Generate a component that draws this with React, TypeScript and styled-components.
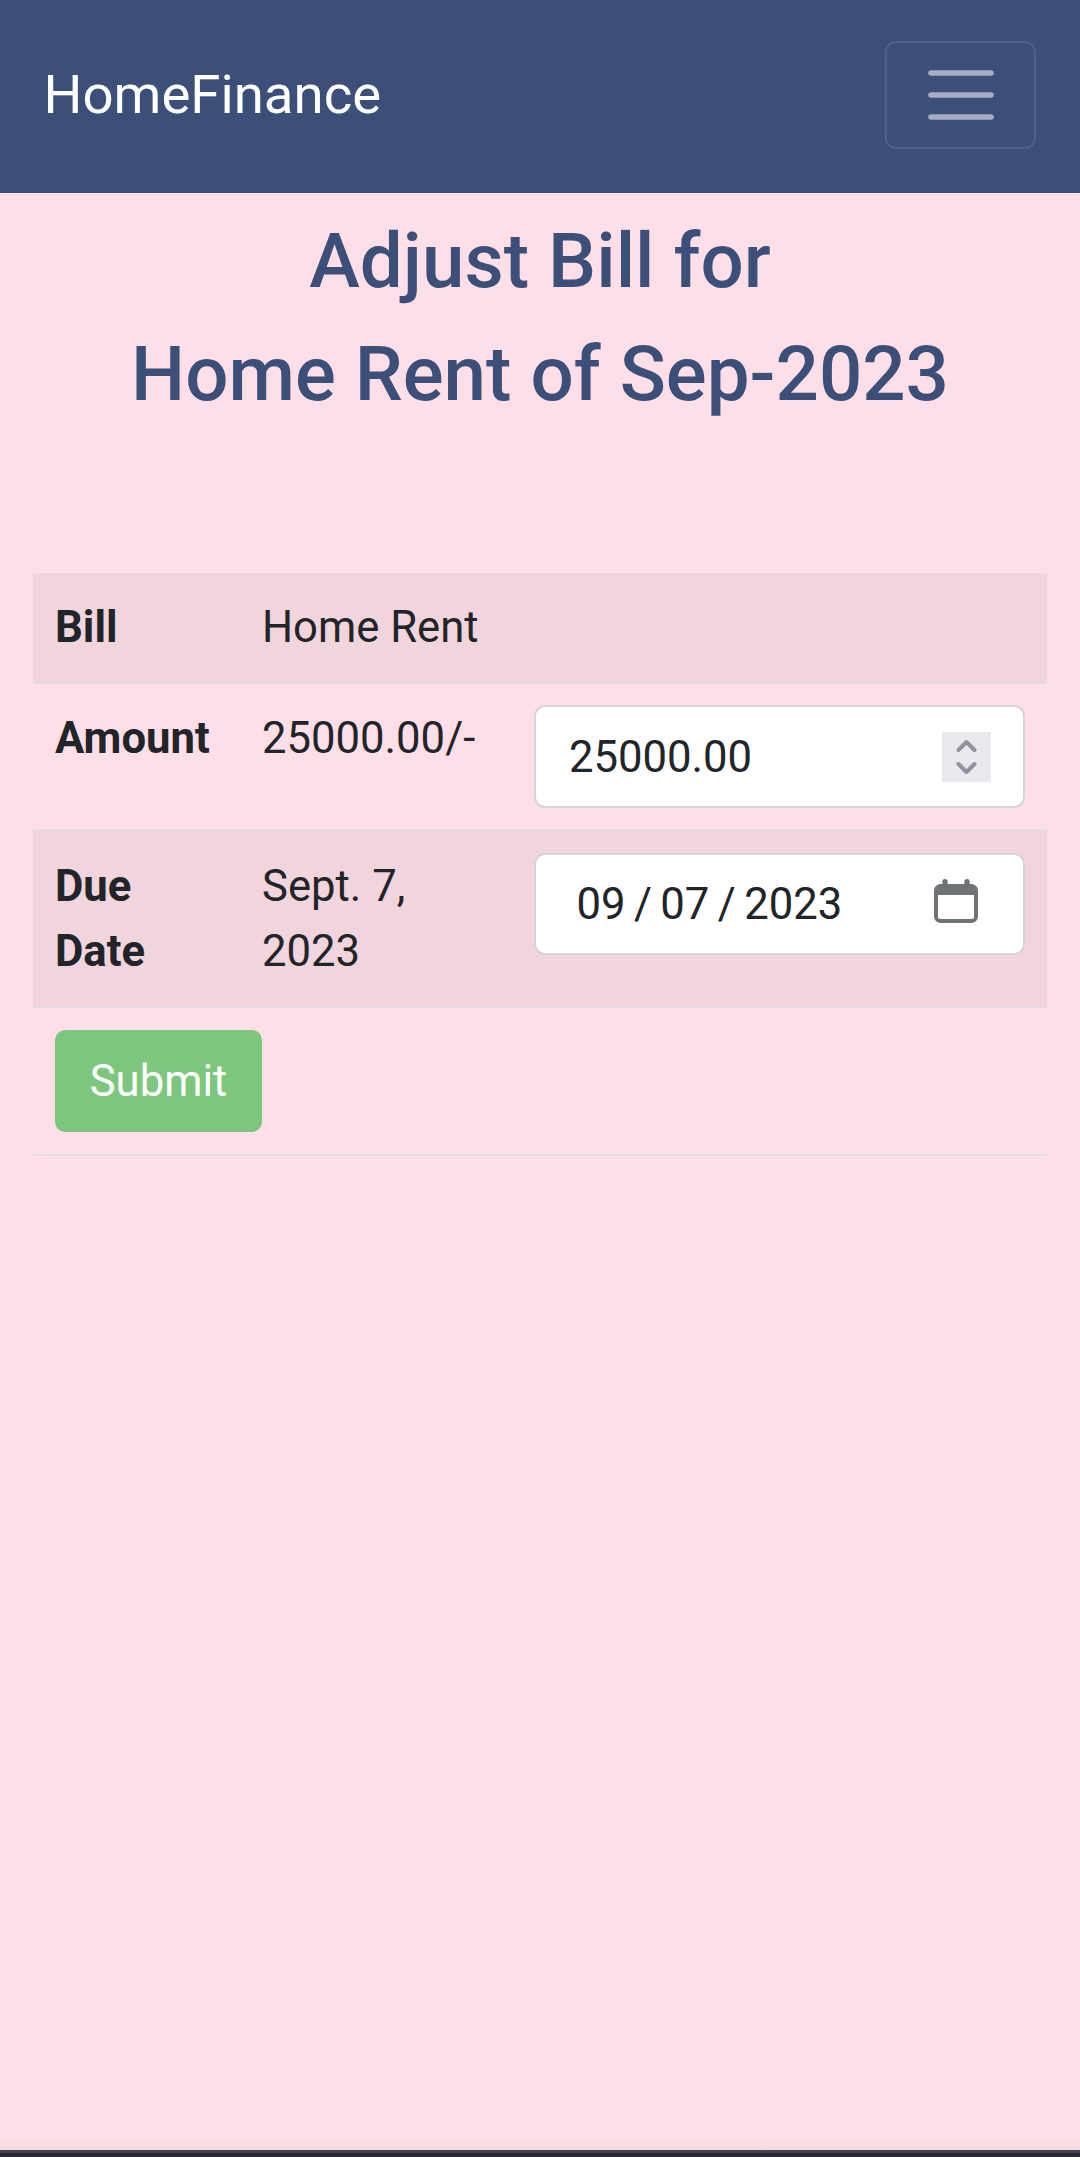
import React from "react";
import styled, { createGlobalStyle } from "styled-components";

const GlobalStyle = createGlobalStyle`
  *, *::before, *::after { box-sizing: border-box; }
  body {
    margin: 0;
    background: #ffdfe7;
    color: #212529;
    font-family: Roboto, "Liberation Sans", sans-serif;
    font-size: 43.63px;
    line-height: 65px;
  }
`;

const Page = styled.div`
  display: flex;
  flex-direction: column;
  height: 2157px;
  overflow: hidden;
`;

const Navbar = styled.nav`
  display: flex;
  align-items: center;
  justify-content: space-between;
  height: 193px;
  padding: 0 44px 3px 43.6px;
  background: #3c4f79;
`;

const Brand = styled.a`
  padding-bottom: 2px;
  color: #fff;
  font-size: 54.54px;
  line-height: 80px;
  text-decoration: none;
`;

const Toggler = styled.button`
  display: flex;
  align-items: center;
  justify-content: center;
  width: 151px;
  height: 108px;
  padding: 0;
  background: transparent;
  border: 2px solid rgba(255, 255, 255, 0.1);
  border-radius: 11px;
`;

const Title = styled.h2`
  margin: 12px 0 0;
  color: #3c4f79;
  font-size: 76.3px;
  font-weight: 500;
  line-height: 113px;
  text-align: center;
`;

const Bill = styled.div`
  display: flex;
  flex-direction: column;
  margin: 142px 33px 0;
`;

const Row = styled.div<{ $height: number; $striped?: boolean }>`
  display: grid;
  grid-template-columns: 207px 272px 1fr;
  height: ${(p) => p.$height}px;
  background: ${(p) => (p.$striped ? "#f1d4dc" : "transparent")};
  border-bottom: 2px solid #e3dbe3;
`;

const Cell = styled.div<{ $bold?: boolean; $top?: number }>`
  padding: ${(p) => p.$top ?? 22}px 22px 0;
  font-weight: ${(p) => (p.$bold ? 700 : 400)};
`;

const Field = styled.div<{ $left: number; $right: number; $height: number }>`
  display: flex;
  align-items: center;
  justify-content: space-between;
  height: ${(p) => p.$height}px;
  padding: 0 ${(p) => p.$right}px 0 ${(p) => p.$left}px;
  background: #fff;
  border: 2px solid #d5d2d9;
  border-radius: 11px;
`;

const NumberValue = styled.span`
  padding-top: 2px;
`;

const DateParts = styled.div`
  display: flex;
  gap: 8.4px;
`;

const Spinner = styled.span`
  display: flex;
  align-items: center;
  justify-content: center;
  width: 49px;
  height: 50px;
  background: #e9e8ed;
`;

const Submit = styled.button`
  width: 207px;
  height: 102px;
  padding: 1px 0 0;
  background: #7dc67d;
  border: 0;
  border-radius: 10px;
  color: #fff;
  font: inherit;
`;

const SystemBar = styled.footer`
  height: 24px;
  margin-top: auto;
  background: linear-gradient(
    #ffdfe7 0,
    #f6d9e0 17px,
    #45444c 17px,
    #45444c 20px,
    #2a2734 20px
  );
`;

const MenuIcon = () => (
  <svg width="66" height="50" viewBox="0 0 66 50" fill="none">
    <path d="M3 3H63M3 25H63M3 47H63" stroke="#a5aec3" strokeWidth="5.6" strokeLinecap="round" />
  </svg>
);

const ArrowsIcon = () => (
  <svg width="49" height="50" viewBox="0 0 49 50" fill="none">
    <path
      d="M16.5 18L24.5 10L32.5 18M16.5 32L24.5 40L32.5 32"
      stroke="#92919e"
      strokeWidth="4"
      strokeLinecap="round"
      strokeLinejoin="round"
    />
  </svg>
);

const CalendarIcon = () => (
  <svg width="44" height="50" viewBox="0 0 44 50">
    <path
      fill="#6e7376"
      fillRule="evenodd"
      d="M8.3 5V2.5a2.7 2.5 0 0 1 5.4 0V5H30.3V2.5a2.7 2.5 0 0 1 5.4 0V5H37.5a6.5 6.5 0 0 1 6.5 6.5V37.5a6.5 6.5 0 0 1-6.5 6.5H6.5a6.5 6.5 0 0 1-6.5-6.5V11.5A6.5 6.5 0 0 1 6.5 5ZM4 16V37.5a2.5 2.5 0 0 0 2.5 2.5H37.5a2.5 2.5 0 0 0 2.5-2.5V16Z"
    />
  </svg>
);

export default function App() {
  return (
    <Page>
      <GlobalStyle />
      <Navbar>
        <Brand>HomeFinance</Brand>
        <Toggler aria-label="Toggle navigation">
          <MenuIcon />
        </Toggler>
      </Navbar>
      <Title>
        Adjust Bill for
        <br />
        Home Rent of Sep-2023
      </Title>
      <Bill>
        <Row $height={111} $striped>
          <Cell $bold>Bill</Cell>
          <Cell>Home Rent</Cell>
        </Row>
        <Row $height={147}>
          <Cell $bold>Amount</Cell>
          <Cell>25000.00/-</Cell>
          <Cell $top={21}>
            <Field $left={33} $right={32} $height={103}>
              <NumberValue>25000.00</NumberValue>
              <Spinner>
                <ArrowsIcon />
              </Spinner>
            </Field>
          </Cell>
        </Row>
        <Row $height={177} $striped>
          <Cell $bold $top={23}>
            Due
            <br />
            Date
          </Cell>
          <Cell $top={23}>
            Sept. 7,
            <br />
            2023
          </Cell>
          <Cell $top={22}>
            <Field $left={40.5} $right={45} $height={102}>
              <DateParts>
                <span>09</span>
                <span>/</span>
                <span>07</span>
                <span>/</span>
                <span>2023</span>
              </DateParts>
              <CalendarIcon />
            </Field>
          </Cell>
        </Row>
        <Row $height={148}>
          <Cell $top={22}>
            <Submit>Submit</Submit>
          </Cell>
        </Row>
      </Bill>
      <SystemBar />
    </Page>
  );
}
